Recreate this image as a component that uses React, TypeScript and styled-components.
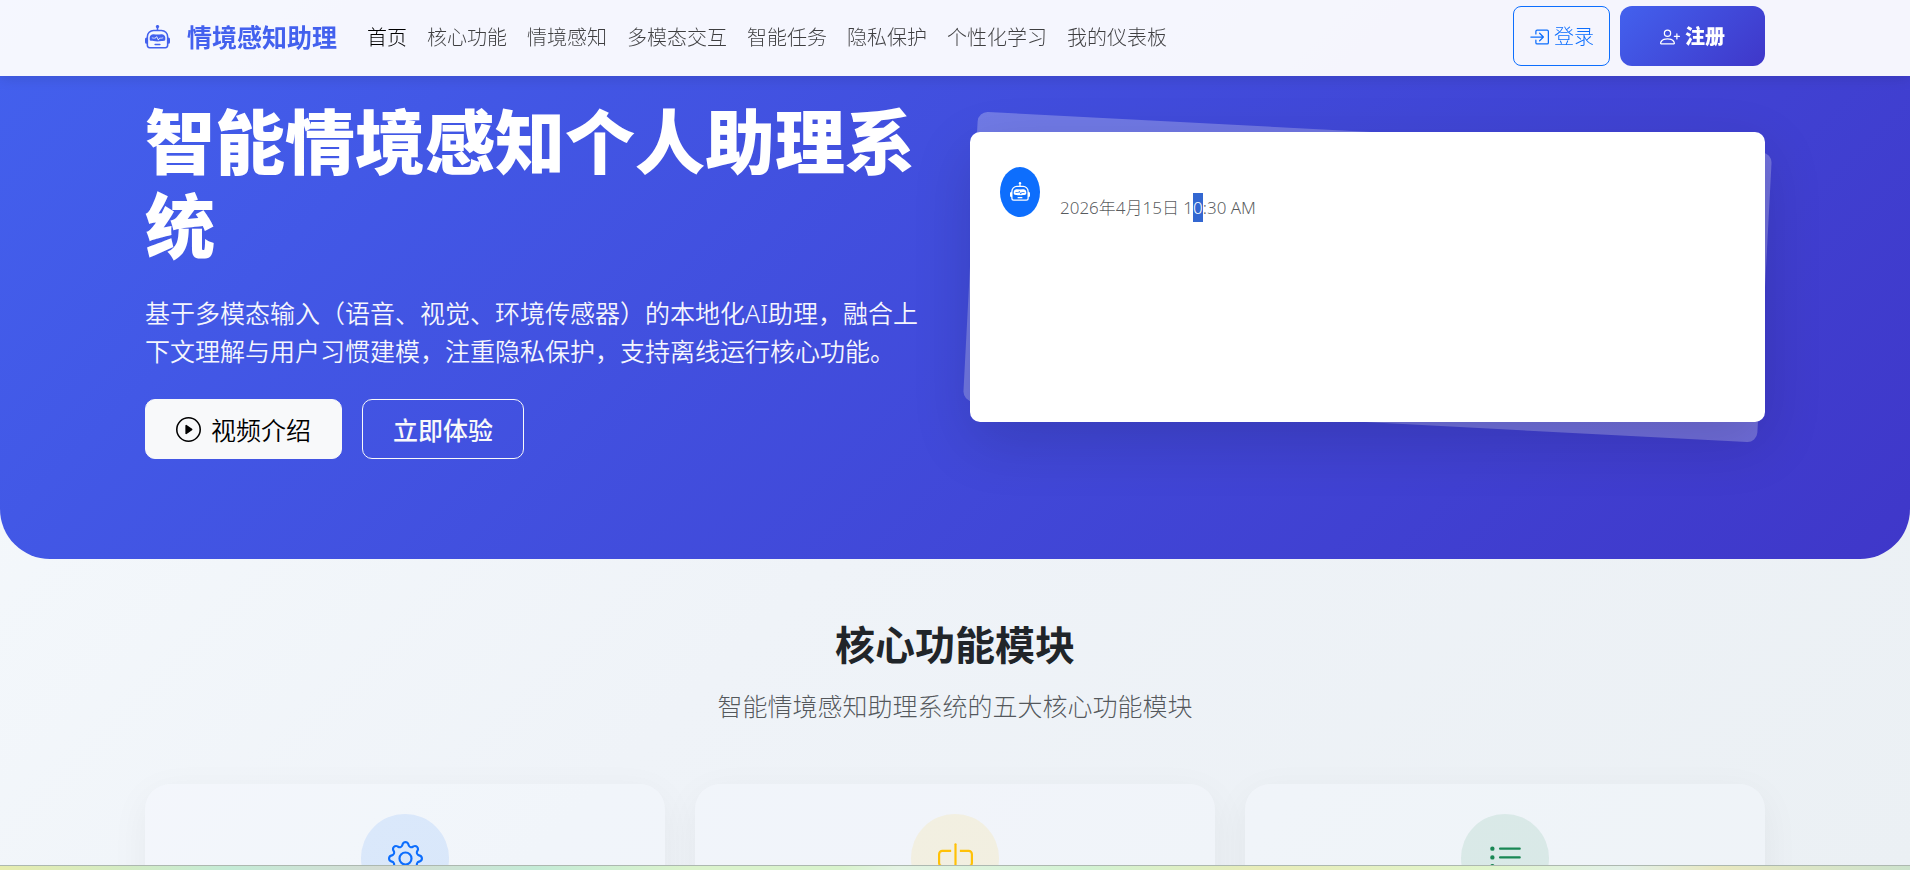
import React from 'react';
import styled, { createGlobalStyle } from 'styled-components';
import {
  BsRobot,
  BsBoxArrowInRight,
  BsPersonPlus,
  BsPlayCircle,
  BsGear,
  BsInputCursor,
  BsListUl,
} from 'react-icons/bs';

const GlobalStyle = createGlobalStyle`
  *, *::before, *::after { box-sizing: border-box; }
  html { height: 100%; overflow: hidden; }
  body {
    margin: 0;
    height: 100%;
    overflow: hidden;
    color: #212529;
    background: linear-gradient(135deg, #f6fafd 0%, #eff3f8 50%, #ebf0f4 100%);
    font-family: "Open Sans", "Noto Sans CJK SC", sans-serif;
    font-size: 20px;
    font-weight: 300;
    line-height: 30px;
  }
  #root { height: 100%; }
  h1, h2, p { margin: 0; }
  a { color: inherit; text-decoration: none; }
  button { font: inherit; cursor: pointer; }
  svg { display: block; flex: none; }
`;

const Page = styled.div`
  height: 100%;
  display: flex;
  flex-direction: column;
  overflow: hidden;
`;

const Scroller = styled.div`
  flex: 1;
  min-height: 0;
  overflow: hidden;
`;

const Container = styled.div`
  width: 100%;
  max-width: 1650px;
  margin: 0 auto;
  padding: 0 15px;
`;

const Header = styled.header`
  position: sticky;
  top: 0;
  z-index: 10;
  height: 76px;
  margin-bottom: -76px;
  background: rgba(255, 255, 255, 0.95);
  box-shadow: 0 3px 12px rgba(0, 0, 0, 0.1);
`;

const HeaderRow = styled(Container)`
  height: 100%;
  display: flex;
  align-items: center;
  padding-bottom: 4px;
`;

const Brand = styled.a`
  display: flex;
  align-items: center;
  gap: 17px;
  margin-right: 20px;
  padding-top: 2px;
  color: #4361ee;
  font-size: 25px;
  font-weight: 700;
  white-space: nowrap;
`;

const Nav = styled.nav`
  display: flex;
  flex: 1;
  padding-top: 3px;
`;

const NavLink = styled.a<{ $active?: boolean }>`
  padding: 10px;
  white-space: nowrap;
  color: ${(p) => (p.$active ? '#000' : 'rgba(0, 0, 0, 0.75)')};
`;

const Actions = styled.div`
  display: flex;
  gap: 10px;
`;

const AuthButton = styled.button`
  display: flex;
  align-items: center;
  gap: 5px;
  height: 60px;
  white-space: nowrap;
`;

const LoginButton = styled(AuthButton)`
  padding: 2px 15px 0;
  border: 1px solid #0d6efd;
  border-radius: 8px;
  background: transparent;
  color: #0d6efd;
`;

const RegisterButton = styled(AuthButton)`
  padding: 2px 40px 0;
  border: 0;
  border-radius: 12px;
  background: linear-gradient(135deg, #4361ee, #3f37c9);
  color: #fff;
  font-weight: 900;
`;

const Hero = styled.section`
  padding: 95px 0 100px;
  border-radius: 0 0 50px 50px;
  background: linear-gradient(135deg, #4361ee 0%, #3f37c9 100%);
  color: #fff;
`;

const HeroRow = styled(Container)`
  display: grid;
  grid-template-columns: 1fr 1fr;
  gap: 30px;
  align-items: center;
`;

const HeroTitle = styled.h1`
  margin-bottom: 26px;
  padding-top: 5px;
  font-size: 70px;
  font-weight: 900;
  line-height: 84px;
`;

const HeroLead = styled.p`
  margin-bottom: 29px;
  font-family: "Noto Sans", "Noto Sans CJK SC", sans-serif;
  font-size: 25px;
  font-weight: 350;
  line-height: 38px;
  opacity: 0.95;
`;

const HeroButtons = styled.div`
  display: flex;
  gap: 20px;
`;

const HeroButton = styled.button<{ $outline?: boolean }>`
  display: flex;
  align-items: center;
  gap: 10px;
  height: 60px;
  padding: 1px 30px 0;
  border: 1px solid #f8f9fa;
  border-radius: 10px;
  background: ${(p) => (p.$outline ? 'transparent' : '#f8f9fa')};
  color: ${(p) => (p.$outline ? '#f8f9fa' : '#000')};
  font-size: 25px;
  font-weight: ${(p) => (p.$outline ? 500 : 350)};
`;

const Demo = styled.div`
  position: relative;
  z-index: 0;

  &::before {
    content: "";
    position: absolute;
    inset: 0;
    z-index: -1;
    border-radius: 10px;
    background: rgba(255, 255, 255, 0.25);
    transform: rotate(3deg);
  }
`;

const DemoCard = styled.div`
  display: flex;
  gap: 20px;
  min-height: 290px;
  padding: 35px 30px;
  border-radius: 10px;
  background: #fff;
  box-shadow: 0 20px 60px rgba(0, 0, 0, 0.14);
`;

const Avatar = styled.span`
  display: flex;
  align-items: center;
  justify-content: center;
  width: 40px;
  height: 50px;
  border-radius: 50%;
  background: #0d6efd;
  color: #fff;
`;

const DemoTime = styled.time`
  padding-top: 26px;
  color: rgba(33, 37, 41, 0.75);
  font-family: "Noto Sans", "Noto Sans CJK SC", sans-serif;
  font-size: 17px;
`;

const Selected = styled.mark`
  padding: 3px 0;
  background: #3367d1;
  color: #fff;
`;

const Features = styled.section`
  padding: 62px 0 100px;
`;

const SectionHead = styled.div`
  margin-bottom: 59px;
  text-align: center;
`;

const SectionTitle = styled.h2`
  margin-bottom: 18px;
  font-size: 40px;
  font-weight: 700;
  line-height: 48px;
`;

const SectionText = styled.p`
  color: rgba(33, 37, 41, 0.75);
  font-size: 25px;
  line-height: 38px;
`;

const CardGrid = styled.div`
  display: grid;
  grid-template-columns: repeat(3, 1fr);
  gap: 30px;
`;

const FeatureCard = styled.article`
  display: flex;
  justify-content: center;
  padding: 30px;
  border-radius: 25px;
  background: rgba(245, 249, 255, 0.35);
  box-shadow: 0 10px 38px rgba(0, 0, 0, 0.05);
`;

const tints = {
  blue: ['#0d6efd', 'rgba(13, 110, 253, 0.1)'],
  amber: ['#ffc107', 'rgba(255, 193, 7, 0.1)'],
  green: ['#198754', 'rgba(25, 135, 84, 0.1)'],
};

const FeatureIcon = styled.span<{ $tint: keyof typeof tints }>`
  display: flex;
  align-items: center;
  justify-content: center;
  width: 88px;
  height: 88px;
  border-radius: 50%;
  color: ${(p) => tints[p.$tint][0]};
  background: ${(p) => tints[p.$tint][1]};
`;

const BottomStrip = styled.div`
  height: 5px;
  border-top: 1px solid #adb8b0;
  background: linear-gradient(
    90deg,
    #e6ecae 0%, #c4ebd6 12%, #d4dcd4 20%, #c4ebd6 28%, #dbf3cc 36%, #d8f3cc 44%,
    #e4f3e4 47%, #d2f2d2 57%, #e8ecb8 66%, #e0f5cc 78%, #e2f0e8 85%, #e8e8c0 90%, #cce2cc 100%
  );
`;

const navItems = ['首页', '核心功能', '情境感知', '多模态交互', '智能任务', '隐私保护', '个性化学习', '我的仪表板'];

export default function App() {
  return (
    <Page>
      <GlobalStyle />
      <Scroller>
        <Header>
          <HeaderRow>
            <Brand href="#">
              <BsRobot size={25} aria-hidden />
              情境感知助理
            </Brand>
            <Nav>
              {navItems.map((item, i) => (
                <NavLink key={item} href="#" $active={i === 0}>
                  {item}
                </NavLink>
              ))}
            </Nav>
            <Actions>
              <LoginButton type="button">
                <BsBoxArrowInRight size={20} aria-hidden />
                登录
              </LoginButton>
              <RegisterButton type="button">
                <BsPersonPlus size={20} aria-hidden />
                注册
              </RegisterButton>
            </Actions>
          </HeaderRow>
        </Header>

        <Hero>
          <HeroRow>
            <div>
              <HeroTitle>智能情境感知个人助理系统</HeroTitle>
              <HeroLead>
                基于多模态输入（语音、视觉、环境传感器）的本地化AI助理，融合上下文理解与用户习惯建模，注重隐私保护，支持离线运行核心功能。
              </HeroLead>
              <HeroButtons>
                <HeroButton type="button">
                  <BsPlayCircle size={25} aria-hidden />
                  视频介绍
                </HeroButton>
                <HeroButton type="button" $outline>
                  立即体验
                </HeroButton>
              </HeroButtons>
            </div>
            <Demo>
              <DemoCard>
                <Avatar>
                  <BsRobot size={20} aria-hidden />
                </Avatar>
                <DemoTime>
                  2026年4月15日 1<Selected>0</Selected>:30 AM
                </DemoTime>
              </DemoCard>
            </Demo>
          </HeroRow>
        </Hero>

        <Features>
          <Container>
            <SectionHead>
              <SectionTitle>核心功能模块</SectionTitle>
              <SectionText>智能情境感知助理系统的五大核心功能模块</SectionText>
            </SectionHead>
            <CardGrid>
              <FeatureCard>
                <FeatureIcon $tint="blue">
                  <BsGear size={35} aria-hidden />
                </FeatureIcon>
              </FeatureCard>
              <FeatureCard>
                <FeatureIcon $tint="amber">
                  <BsInputCursor size={35} aria-hidden />
                </FeatureIcon>
              </FeatureCard>
              <FeatureCard>
                <FeatureIcon $tint="green">
                  <BsListUl size={35} aria-hidden />
                </FeatureIcon>
              </FeatureCard>
            </CardGrid>
          </Container>
        </Features>
      </Scroller>
      <BottomStrip />
    </Page>
  );
}
